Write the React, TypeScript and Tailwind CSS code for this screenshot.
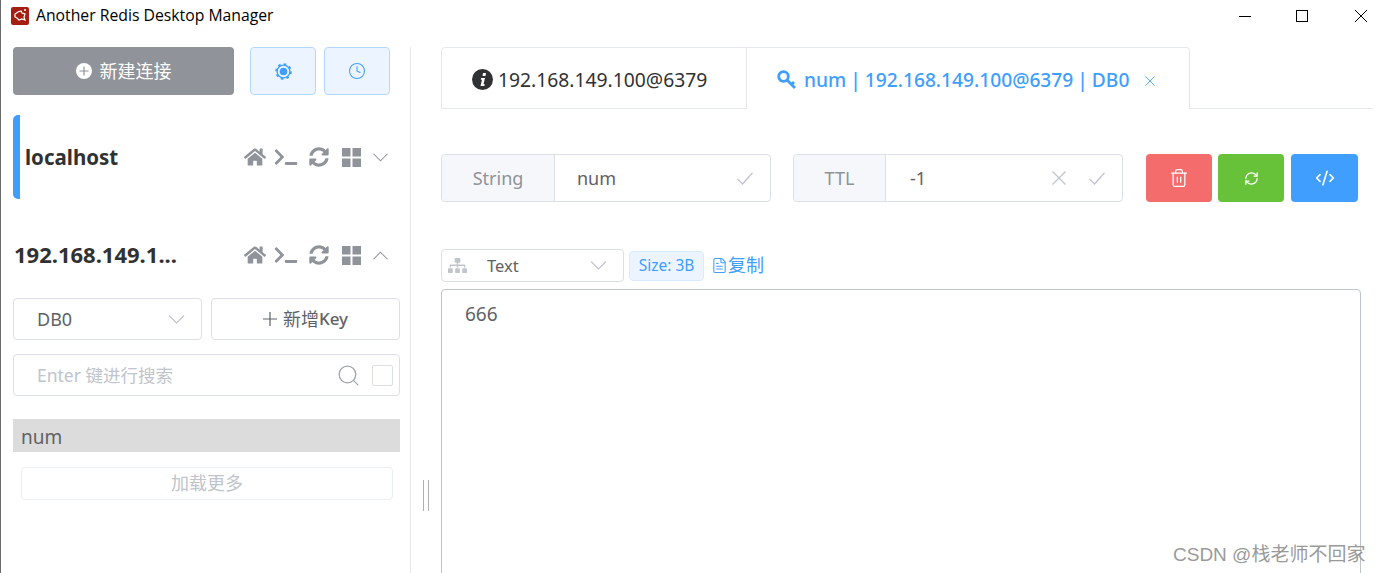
import React from 'react';
import { FaHome, FaTerminal, FaSyncAlt, FaSitemap } from 'react-icons/fa';
import { Search, Clock, Trash2, RefreshCw, CodeXml, FileText } from 'lucide-react';

const font = { fontFamily: '"Noto Sans", "Noto Sans CJK SC", sans-serif' };

const Chevron: React.FC<{ up?: boolean; className?: string }> = ({ up, className }) => (
  <svg viewBox="0 0 16 9" className={className} fill="none" stroke="currentColor" strokeWidth="1.1">
    <path d={up ? 'M0.500 8.500L8 1l7.500 7.500' : 'M0.500 0.500L8 8l7.500-7.500'} />
  </svg>
);

const Tick: React.FC = () => (
  <svg viewBox="0 0 16 13" className="w-[16px] h-[13px] text-[#c0c4cc]" fill="none" stroke="currentColor" strokeWidth="1.300">
    <path d="M0.500 7l5 5L15.500 0.800" />
  </svg>
);

const Cross: React.FC<{ className?: string }> = ({ className }) => (
  <svg viewBox="0 0 14 14" className={className} fill="none" stroke="currentColor" strokeWidth="1.200">
    <path d="M0.500 0.500l13 13M13.500 0.500l-13 13" />
  </svg>
);

const ConnectionIcons: React.FC<{ open?: boolean }> = ({ open }) => (
  <div className="flex items-center text-[#909399]">
    <FaHome className="w-[22px] h-[20px]" />
    <FaTerminal className="w-[24px] h-[18px] ml-[8px]" />
    <FaSyncAlt className="w-[20px] h-[20px] ml-[11px]" />
    <svg viewBox="0 0 19 19" className="w-[19px] h-[19px] ml-[13px]" fill="currentColor">
      <rect width="8.500" height="8.500" />
      <rect x="10.500" width="8.500" height="8.500" />
      <rect y="10.500" width="8.500" height="8.500" />
      <rect x="10.500" y="10.500" width="8.500" height="8.500" />
    </svg>
    <Chevron up={open} className="w-[15px] h-[9px] ml-[12px] mr-[2px]" />
  </div>
);

const Sidebar: React.FC = () => (
  <aside className="w-[411px] shrink-0 mt-[15px] border-r border-[#e4e7ed] pl-[13px] pr-[10px] h-[526px]">
    <div className="flex">
      <button className="w-[221px] h-[48px] rounded-[4px] bg-[#909399] text-white text-[18px] flex items-center justify-center">
        <svg viewBox="0 0 16 16" className="w-[16px] h-[16px] mr-[8px]">
          <circle cx="8" cy="8" r="8" fill="#fff" />
          <path d="M8 3.500v9M3.500 8h9" stroke="#909399" strokeWidth="1.200" />
        </svg>
        新建连接
      </button>
      <button className="w-[66px] h-[48px] ml-[16px] rounded-[4px] bg-[#ecf5ff] border border-[#b3d8ff] flex items-center justify-center">
        <svg viewBox="0 0 16 16" className="w-[17px] h-[17px]" fill="none" stroke="#409eff">
          <circle cx="8" cy="8" r="6" strokeWidth="1.300" />
          <circle cx="8" cy="8" r="7" strokeWidth="1.600" strokeDasharray="2.500 3" />
          <circle cx="8" cy="8" r="3.600" fill="#409eff" stroke="none" />
        </svg>
      </button>
      <button className="w-[66px] h-[48px] ml-[8px] rounded-[4px] bg-[#ecf5ff] border border-[#b3d8ff] flex items-center justify-center">
        <Clock className="w-[18px] h-[18px] text-[#409eff]" strokeWidth={1.4} />
      </button>
    </div>

    <div className="mt-[20px] h-[84px] w-[377px] border-l-[7px] border-[#409eff] rounded-l-[5px] flex items-center pl-[5px]">
      <span className="flex-1 text-[20.500px] font-bold text-[#303133] pt-[1px]">localhost</span>
      <ConnectionIcons />
    </div>

    <div className="mt-[36px] w-[377px] h-[40px] flex items-center pl-[1px]">
      <span className="flex-1 text-[22px] font-bold text-[#303133] pb-[2px]">192.168.149.1...</span>
      <ConnectionIcons open />
    </div>

    <div className="mt-[23px] flex gap-[9px] w-[387px]">
      <div className="w-[189px] h-[42px] rounded-[4px] border border-[#dcdfe6] flex items-center pl-[23px] pr-[16px] text-[18px] text-[#606266]">
        <span className="flex-1 pt-[1px]">DB0</span>
        <Chevron className="w-[17px] h-[9px] text-[#c0c4cc]" />
      </div>
      <button className="w-[189px] h-[42px] rounded-[4px] border border-[#dcdfe6] flex items-center justify-center text-[18px] text-[#606266]">
        <svg viewBox="0 0 14 14" className="w-[14px] h-[14px] mr-[6px]" fill="none" stroke="currentColor" strokeWidth="1.200">
          <path d="M7 0v14M0 7h14" />
        </svg>
        新增<span className="font-medium text-[17px]">Key</span>
      </button>
    </div>

    <div className="mt-[14px] w-[387px] h-[42px] rounded-[4px] border border-[#dcdfe6] flex items-center pl-[23px] pr-[6px] text-[17.500px] text-[#c0c4cc]">
      <span className="flex-1">Enter 键进行搜索</span>
      <Search className="w-[25px] h-[25px] text-[#a0a4ac] mr-[11px]" strokeWidth={1.2} />
      <span className="w-[21px] h-[21px] rounded-[2px] border border-[#dcdfe6]" />
    </div>

    <div className="mt-[23px] w-[387px] h-[33px] bg-[#dcdcdc] pl-[8px] text-[19px] leading-[36px] text-[#606266]">num</div>

    <div className="mt-[15px] ml-[8px] w-[372px] h-[33px] rounded-[4px] border border-[#ebeef5] flex items-center justify-center text-[18px] text-[#c0c4cc]">
      加载更多
    </div>
  </aside>
);

const Tabs: React.FC = () => (
  <div className="flex h-[62px] w-[932px] border-b border-[#e4e7ed]">
    <div className="w-[306px] h-[62px] bg-white border border-[#e4e7ed] flex items-center pl-[30px] pt-[4px] text-[19.300px] text-[#303133] rounded-tl-[4px]">
      <svg viewBox="0 0 21 21" className="w-[21px] h-[21px] mr-[5px] -mt-[1px]">
        <circle cx="10.500" cy="10.500" r="10.500" fill="#303133" />
        <path d="M11 4h3l-.5 3h-3zM9 9h4l-1.500 6.200h1.300l-.4 1.800H8.500l1.500-6.200H8.800z" fill="#fff" />
      </svg>
      192.168.149.100@6379
    </div>
    <div className="w-[443px] h-[62px] bg-white border border-l-0 border-b-0 border-[#e4e7ed] rounded-tr-[4px] flex items-center pl-[30px] pt-[4px] text-[19.200px] font-medium text-[#409eff] [word-spacing:-1px]">
      <svg viewBox="0 0 20 20" className="w-[20px] h-[20px] mr-[7px] -mt-[2px]" fill="none" stroke="currentColor" strokeWidth="2.800">
        <circle cx="6.500" cy="6.500" r="4.800" />
        <path d="M10 10l8 8M14.500 14.500l2.500-2.500" />
      </svg>
      num | 192.168.149.100@6379 | DB0
      <Cross className="w-[10px] h-[10px] ml-[16px]" />
    </div>
  </div>
);

const KeyRow: React.FC = () => (
  <div className="mt-[45px] flex h-[48px]">
    <div className="w-[330px] rounded-[4px] border border-[#dcdfe6] flex text-[18px]">
      <div className="w-[113px] bg-[#f5f7fa] border-r border-[#dcdfe6] rounded-l-[4px] flex items-center justify-center text-[#909399]">String</div>
      <div className="flex-1 flex items-center pl-[22px] pr-[17px] text-[#606266]">
        <span className="flex-1 pt-[1px]">num</span>
        <Tick />
      </div>
    </div>
    <div className="w-[330px] ml-[22px] rounded-[4px] border border-[#dcdfe6] flex text-[18px]">
      <div className="w-[92px] bg-[#f5f7fa] border-r border-[#dcdfe6] rounded-l-[4px] flex items-center justify-center text-[#909399]">TTL</div>
      <div className="flex-1 flex items-center pl-[24px] pr-[17px] text-[#606266]">
        <span className="flex-1 pt-[1px]">-1</span>
        <Cross className="w-[14px] h-[14px] text-[#c0c4cc] mr-[23px]" />
        <Tick />
      </div>
    </div>
    <button className="w-[66px] ml-[23px] rounded-[4px] bg-[#f56c6c] flex items-center justify-center text-white">
      <Trash2 className="w-[20px] h-[20px]" strokeWidth={1.5} />
    </button>
    <button className="w-[66px] ml-[6px] rounded-[4px] bg-[#67c23a] flex items-center justify-center text-white">
      <RefreshCw className="w-[15px] h-[15px]" strokeWidth={2} />
    </button>
    <button className="w-[67px] ml-[7px] rounded-[4px] bg-[#409eff] flex items-center justify-center text-white">
      <CodeXml className="w-[20px] h-[20px]" strokeWidth={2} />
    </button>
  </div>
);

const FormatRow: React.FC = () => (
  <div className="mt-[47px] flex items-center h-[33px]">
    <div className="w-[183px] h-[33px] rounded-[4px] border border-[#dcdfe6] flex items-center pl-[6px] pr-[16px] text-[16.500px] text-[#606266]">
      <FaSitemap className="w-[19px] h-[17px] text-[#c0c4cc]" />
      <span className="flex-1 pl-[20px] pt-[1px]">Text</span>
      <Chevron className="w-[17px] h-[9px] text-[#c0c4cc]" />
    </div>
    <span className="ml-[5px] w-[75px] h-[30px] rounded-[4px] bg-[#ecf5ff] border border-[#d9ecff] flex items-center justify-center text-[15.500px] text-[#409eff]">
      Size: 3B
    </span>
    <span className="ml-[7px] flex items-center text-[18px] text-[#409eff]">
      <FileText className="w-[17px] h-[17px]" strokeWidth={1.5} />
      复制
    </span>
  </div>
);

const WindowBar: React.FC = () => (
  <header className="h-[32px] flex items-center pl-[11px] pr-[11px]">
    <svg viewBox="0 0 18 18" className="w-[18px] h-[18px]">
      <rect width="18" height="18" rx="2" fill="#a41e11" />
      <path d="M4 7l3-2 3-1 1 2 3 1-1 3 1 3-3-1-3 1-2-2-2-1z" fill="none" stroke="#fff" strokeWidth="1.200" />
      <circle cx="14" cy="3" r="1" fill="#fff" />
    </svg>
    <span className="ml-[7px] flex-1 text-[15.750px] text-black" style={{ fontFamily: '"Open Sans", sans-serif' }}>
      Another Redis Desktop Manager
    </span>
    <svg viewBox="0 0 130 14" className="w-[130px] h-[14px]" fill="none" stroke="#000" strokeWidth="1">
      <path d="M1 7.500h12" />
      <rect x="58.500" y="1.500" width="11" height="11" />
      <path d="M117 1l12 12M129 1l-12 12" />
    </svg>
  </header>
);

export default function App() {
  return (
    <div className="relative w-[1379px] h-[573px] overflow-hidden bg-white shadow-[inset_1px_0_0_#6b6b6b]" style={font}>
      <WindowBar />
      <div className="flex">
        <Sidebar />
        <main className="pl-[30px] pt-[15px]">
          <Tabs />
          <KeyRow />
          <FormatRow />
          <div className="mt-[7px] w-[920px] h-[300px] rounded-[4px] border border-[#c0c4cc] pl-[23px] pt-[10px] text-[19px] text-[#606266]">666</div>
        </main>
      </div>
      <div className="absolute left-[423px] top-[480px] w-[6px] h-[31px] border-x border-[#b0b0b0]" />
      <span className="absolute left-[1173px] top-[541px] text-[19px] text-[#9a9a9a]" style={{ fontFamily: '"Liberation Sans", "Noto Sans CJK SC", sans-serif' }}>CSDN @栈老师不回家</span>
    </div>
  );
}
